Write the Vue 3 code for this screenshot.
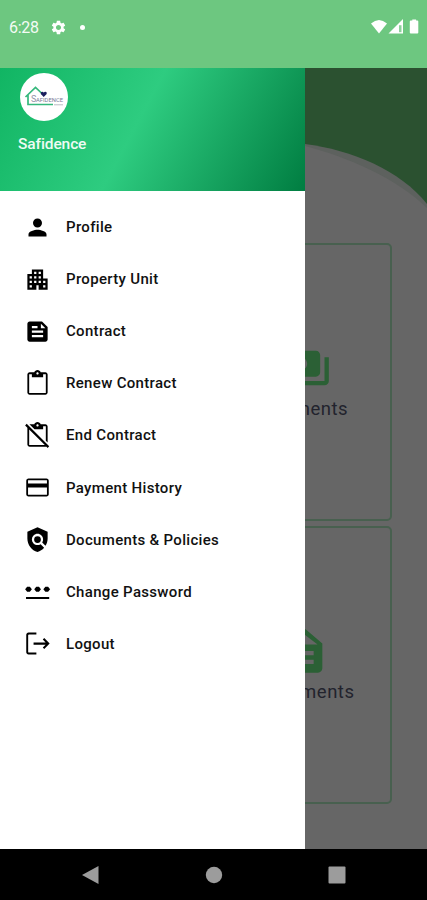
<template>
  <div class="phone">
    <!-- status bar -->
    <header class="status-bar">
      <span class="time">6:28</span>
      <svg class="gear" viewBox="0 0 24 24">
        <path d="M19.14 12.94c.04-.3.06-.61.06-.94 0-.32-.02-.64-.07-.94l2.03-1.58c.18-.14.23-.41.12-.61l-1.92-3.32c-.12-.22-.37-.29-.59-.22l-2.39.96c-.5-.38-1.03-.7-1.62-.94l-.36-2.54c-.04-.24-.24-.41-.48-.41h-3.84c-.24 0-.43.17-.47.41l-.36 2.54c-.59.24-1.13.57-1.62.94l-2.39-.96c-.22-.08-.47 0-.59.22L2.74 8.87c-.12.21-.08.47.12.61l2.03 1.58c-.05.3-.09.63-.09.94s.02.64.07.94l-2.03 1.58c-.18.14-.23.41-.12.61l1.92 3.32c.12.22.37.29.59.22l2.39-.96c.5.38 1.03.7 1.62.94l.36 2.54c.05.24.24.41.48.41h3.84c.24 0 .44-.17.47-.41l.36-2.54c.59-.24 1.13-.56 1.62-.94l2.39.96c.22.08.47 0 .59-.22l1.92-3.32c.12-.22.07-.47-.12-.61l-2.01-1.58zM12 15.6c-1.98 0-3.6-1.62-3.6-3.6s1.62-3.6 3.6-3.6 3.6 1.62 3.6 3.6-1.62 3.6-3.6 3.6z" />
      </svg>
      <span class="dot"></span>
      <svg class="signals" viewBox="0 0 50 16">
        <path d="M0 4.6Q8 -2.6 16 4.6L8 14.6z" />
        <path d="M17.500 14.6L32 0V14.6z" />
        <path class="signal-gap" d="M28 6.200H30.500V13.200H28z" />
        <path d="M38.800 2.6q0-1 1-1h1.500V.4h3.800v1.200h1.200q1 0 1 1v11q0 1-1 1h-6.500q-1 0-1-1z" />
      </svg>
    </header>

    <main class="stage">
      <!-- dimmed dashboard -->
      <svg class="curve" viewBox="0 0 427 781">
        <path class="curve-shade" d="M0 136C70 88 150 74 213 72C245 72 275 73 305 76C352 82 400 102 427 136V781H0z" />
        <path class="curve-page" d="M0 144C70 96 150 80 213 76C245 76 275 74 305 78C348 89 398 111 427 140V781H0z" />
      </svg>
      <div class="tiles">
        <div class="tile" v-for="tile in tiles" :key="tile.label">
          <svg class="tile-icon" viewBox="0 0 24 24"><path :d="tile.icon" /></svg>
          <span>{{ tile.label }}</span>
        </div>
      </div>

      <!-- drawer -->
      <aside class="drawer">
        <div class="drawer-header">
          <svg class="logo" viewBox="0 0 48 48">
            <circle cx="24" cy="24" r="24" fill="#fff" />
            <path d="M5.500 24L15.500 14.500L23 21.500M8 22V31.500H33" fill="none" stroke="#35b87c" stroke-width="1.700" />
            <path d="M23.700 24L20.800 21Q20.400 18.500 22.500 18.700L23.700 19.500L25 18.700Q27.200 18.400 26.700 21z" fill="#1b1f5e" />
            <text class="logo-initial" x="11" y="29">S</text>
            <text class="logo-name" x="16" y="29" textLength="27" lengthAdjust="spacingAndGlyphs">AFIDENCE</text>
            <path d="M34 31.800H43" stroke="#b9bcc4" stroke-width="1" />
          </svg>
          <span class="brand">Safidence</span>
        </div>
        <ul class="menu">
          <li
            class="menu-item"
            v-for="(item, index) in menu"
            :key="index"
            :class="{ active: index === currentIndex }"
            @click="select(index)"
          >
            <svg class="menu-icon" viewBox="0 0 24 24"><path :d="item.icon" /></svg>
            <span>{{ item.label }}</span>
          </li>
        </ul>
      </aside>
    </main>

    <!-- system navigation -->
    <footer class="nav-bar">
      <svg viewBox="0 0 20 20"><path d="M1 10L17.500 1V19z" /></svg>
      <svg viewBox="0 0 20 20"><circle cx="10" cy="10" r="8.200" /></svg>
      <svg viewBox="0 0 20 20"><rect x="1.500" y="1.500" width="17" height="17" rx="1" /></svg>
    </footer>
  </div>
</template>

<script setup>
import { ref } from 'vue'

const currentIndex = ref(-1)

const tiles = [
  {
    label: 'Payments',
    icon: 'M19 14V6c0-1.100-.9-2-2-2H3c-1.100 0-2 .9-2 2v8c0 1.100.9 2 2 2h14c1.100 0 2-.9 2-2zm-9-1c-1.660 0-3-1.340-3-3s1.340-3 3-3 3 1.340 3 3-1.340 3-3 3zm13-6v11c0 1.100-.9 2-2 2H4v-2h17V7h2z',
  },
  {
    label: 'Documents',
    icon: 'M12.300 2H6c-1.100 0-2 .9-2 2v16c0 1.100.9 2 2 2h12c1.100 0 2-.9 2-2V8.500zM16 18H8v-2h8v2zm0-4H8v-2h8v2zM11 9V3.800L17.800 9z',
  },
]

const menu = [
  {
    label: 'Profile',
    icon: 'M12 12c2.210 0 4-1.790 4-4s-1.790-4-4-4-4 1.790-4 4 1.790 4 4 4zm0 2c-2.670 0-8 1.340-8 4v2h16v-2c0-2.660-5.330-4-8-4z',
  },
  {
    label: 'Property Unit',
    icon: 'M17 11V3H7v4H3v14h8v-4h2v4h8V11h-4zM7 19H5v-2h2v2zm0-4H5v-2h2v2zm0-4H5V9h2v2zm4 4H9v-2h2v2zm0-4H9V9h2v2zm0-4H9V5h2v2zm4 8h-2v-2h2v2zm0-4h-2V9h2v2zm0-4h-2V5h2v2zm4 12h-2v-2h2v2zm0-4h-2v-2h2v2z',
  },
  {
    label: 'Contract',
    icon: 'M16 3H5c-1.100 0-2 .9-2 2v14c0 1.100.9 2 2 2h14c1.100 0 2-.9 2-2V8l-5-5zM7 7h5v2H7V7zm10 10H7v-2h10v2zm0-4H7v-2h10v2zm-2-4V5l4 4h-4z',
  },
  {
    label: 'Renew Contract',
    icon: 'M19 2h-4.180C14.400.84 13.300 0 12 0S9.600.84 9.180 2H5c-1.100 0-2 .9-2 2v16c0 1.100.9 2 2 2h14c1.100 0 2-.9 2-2V4c0-1.100-.9-2-2-2zm-7 0c.55 0 1 .45 1 1s-.45 1-1 1-1-.45-1-1 .45-1 1-1zm7.400 18.500H4.600V3.700H7V6.500h10V3.700h2.400v16.800z',
  },
  {
    label: 'End Contract',
    icon: 'M21 4v14.170l-1.600-1.600V3.700h-2.400V6.500H9.330L4.830 2h4.350C9.600.84 10.700 0 12 0s2.400.84 2.820 2H19c1.100 0 2 .9 2 2zm-9 0c.55 0 1-.45 1-1s-.45-1-1-1-1 .45-1 1 .45 1 1 1zM2.400 1.600L1 3l2 2v15c0 1.100.9 2 2 2h15l1 1 1.400-1.400L2.400 1.600zM4.600 20.500V6.600l13.900 13.900H4.600z',
  },
  {
    label: 'Payment History',
    icon: 'M20 4H4c-1.110 0-1.990.89-1.990 2L2 18c0 1.110.89 2 2 2h16c1.110 0 2-.89 2-2V6c0-1.110-.89-2-2-2zm.4 14.400H3.600V12h16.800v6.400zm0-10H3.600V5.600h16.800v2.800z',
  },
  {
    label: 'Documents & Policies',
    icon: 'M21 5l-9-4-9 4v6c0 5.550 3.840 10.740 9 12 2.300-.56 4.330-1.900 5.880-3.710l-3.120-3.120c-1.940 1.290-4.580 1.070-6.290-.64-1.950-1.950-1.950-5.120 0-7.070 1.950-1.950 5.120-1.950 7.070 0 1.710 1.710 1.920 4.350.64 6.290l2.900 2.900C20.290 15.690 21 13.380 21 11V5zM12 9a3 3 0 1 0 0 6 3 3 0 1 0 0-6z',
  },
  {
    label: 'Change Password',
    icon: 'M1.800 16.800h20.600v1.900H1.800zM2.800 7.700h2.400l1.800 2.300-1.800 2.300H2.800L1 10zM10.900 7.700h2.400l1.800 2.300-1.800 2.300h-2.400L9.100 10zM19 7.700h2.400l1.800 2.300-1.800 2.300H19L17.200 10z',
  },
  {
    label: 'Logout',
    icon: 'M5 3.900h6V2.200H4c-1.100 0-2 .9-2 2v15.600c0 1.100.9 2 2 2h7v-1.700H4.500c-.5 0-.8-.3-.8-.8V4.700c0-.5.3-.8.800-.8zM18 7.200l-1.300 1.300 2.500 2.500H8.500v2h10.700l-2.500 2.500 1.300 1.300 4.800-4.800z',
  },
]

const select = (index) => {
  currentIndex.value = index
}
</script>

<style>
body {
  margin: 0;
  background: #000;
}
</style>

<style scoped>
.phone {
  display: flex;
  flex-direction: column;
  width: 427px;
  height: 900px;
  overflow: hidden;
  font-family: Roboto, "Liberation Sans", sans-serif;
}
.status-bar {
  box-sizing: border-box;
  display: flex;
  align-items: center;
  height: 68px;
  padding: 0 6px 14px 9px;
  background: #6dc780;
  color: #f4fbf5;
  fill: #fff;
}
.time {
  width: 41px;
  font-size: 16px;
  letter-spacing: -0.3px;
}
.gear {
  width: 17px;
  height: 17px;
}
.dot {
  width: 5px;
  height: 5px;
  margin-left: 13px;
  border-radius: 50%;
  background: #fff;
}
.signals {
  width: 50px;
  height: 16px;
  margin-left: auto;
}
.signal-gap {
  fill: #8bd19a;
}
.stage {
  position: relative;
  height: 781px;
  background: #2b5130;
}
.curve {
  position: absolute;
  top: 0;
  left: 0;
  width: 427px;
  height: 781px;
}
.curve-shade {
  fill: #5d615e;
}
.curve-page {
  fill: #666;
}
.tiles {
  position: relative;
  display: grid;
  grid-template-columns: 174px;
  grid-auto-rows: 278px;
  justify-content: end;
  gap: 5px;
  padding: 175px 35px 0 0;
}
.tile {
  box-sizing: border-box;
  display: flex;
  flex-direction: column;
  align-items: center;
  justify-content: center;
  gap: 4px;
  padding-bottom: 2px;
  border: 2px solid #48604f;
  border-radius: 5px;
  color: #22232d;
  font-size: 18.500px;
  letter-spacing: 0.500px;
}
.tile-icon {
  width: 52px;
  height: 52px;
  fill: #2b6035;
}
.drawer {
  position: absolute;
  top: 0;
  left: 0;
  width: 305px;
  height: 781px;
  background: #fff;
}
.drawer-header {
  box-sizing: border-box;
  display: flex;
  flex-direction: column;
  height: 123px;
  padding: 5px 18px 0;
  background: linear-gradient(118deg, #11b563 0%, #2ecc80 45%, #007d41 100%);
}
.logo {
  width: 48px;
  height: 48px;
  margin-left: 2px;
}
.logo-initial {
  font-size: 9px;
  fill: #9294a8;
}
.logo-name {
  font-size: 6px;
  fill: #777a96;
}
.brand {
  margin-top: 13px;
  color: #eefbf3;
  font-size: 15.500px;
  font-weight: 500;
  line-height: 20px;
  letter-spacing: -0.1px;
}
.menu {
  margin: 0;
  padding: 10px 0 0;
  list-style: none;
}
.menu-item {
  display: flex;
  align-items: center;
  gap: 15px;
  height: 52.100px;
  padding-left: 24px;
  color: #111;
  font-size: 15px;
  font-weight: 500;
  letter-spacing: 0.320px;
  cursor: pointer;
}
.menu-item.active {
  background: #eef8f0;
}
.menu-icon {
  width: 27px;
  height: 27px;
  fill: #000;
}
.nav-bar {
  display: flex;
  align-items: center;
  justify-content: space-between;
  height: 51px;
  padding: 0 80px 0 81px;
  background: #000;
  fill: #9c9c9c;
}
.nav-bar svg {
  width: 20px;
  height: 20px;
}
</style>
